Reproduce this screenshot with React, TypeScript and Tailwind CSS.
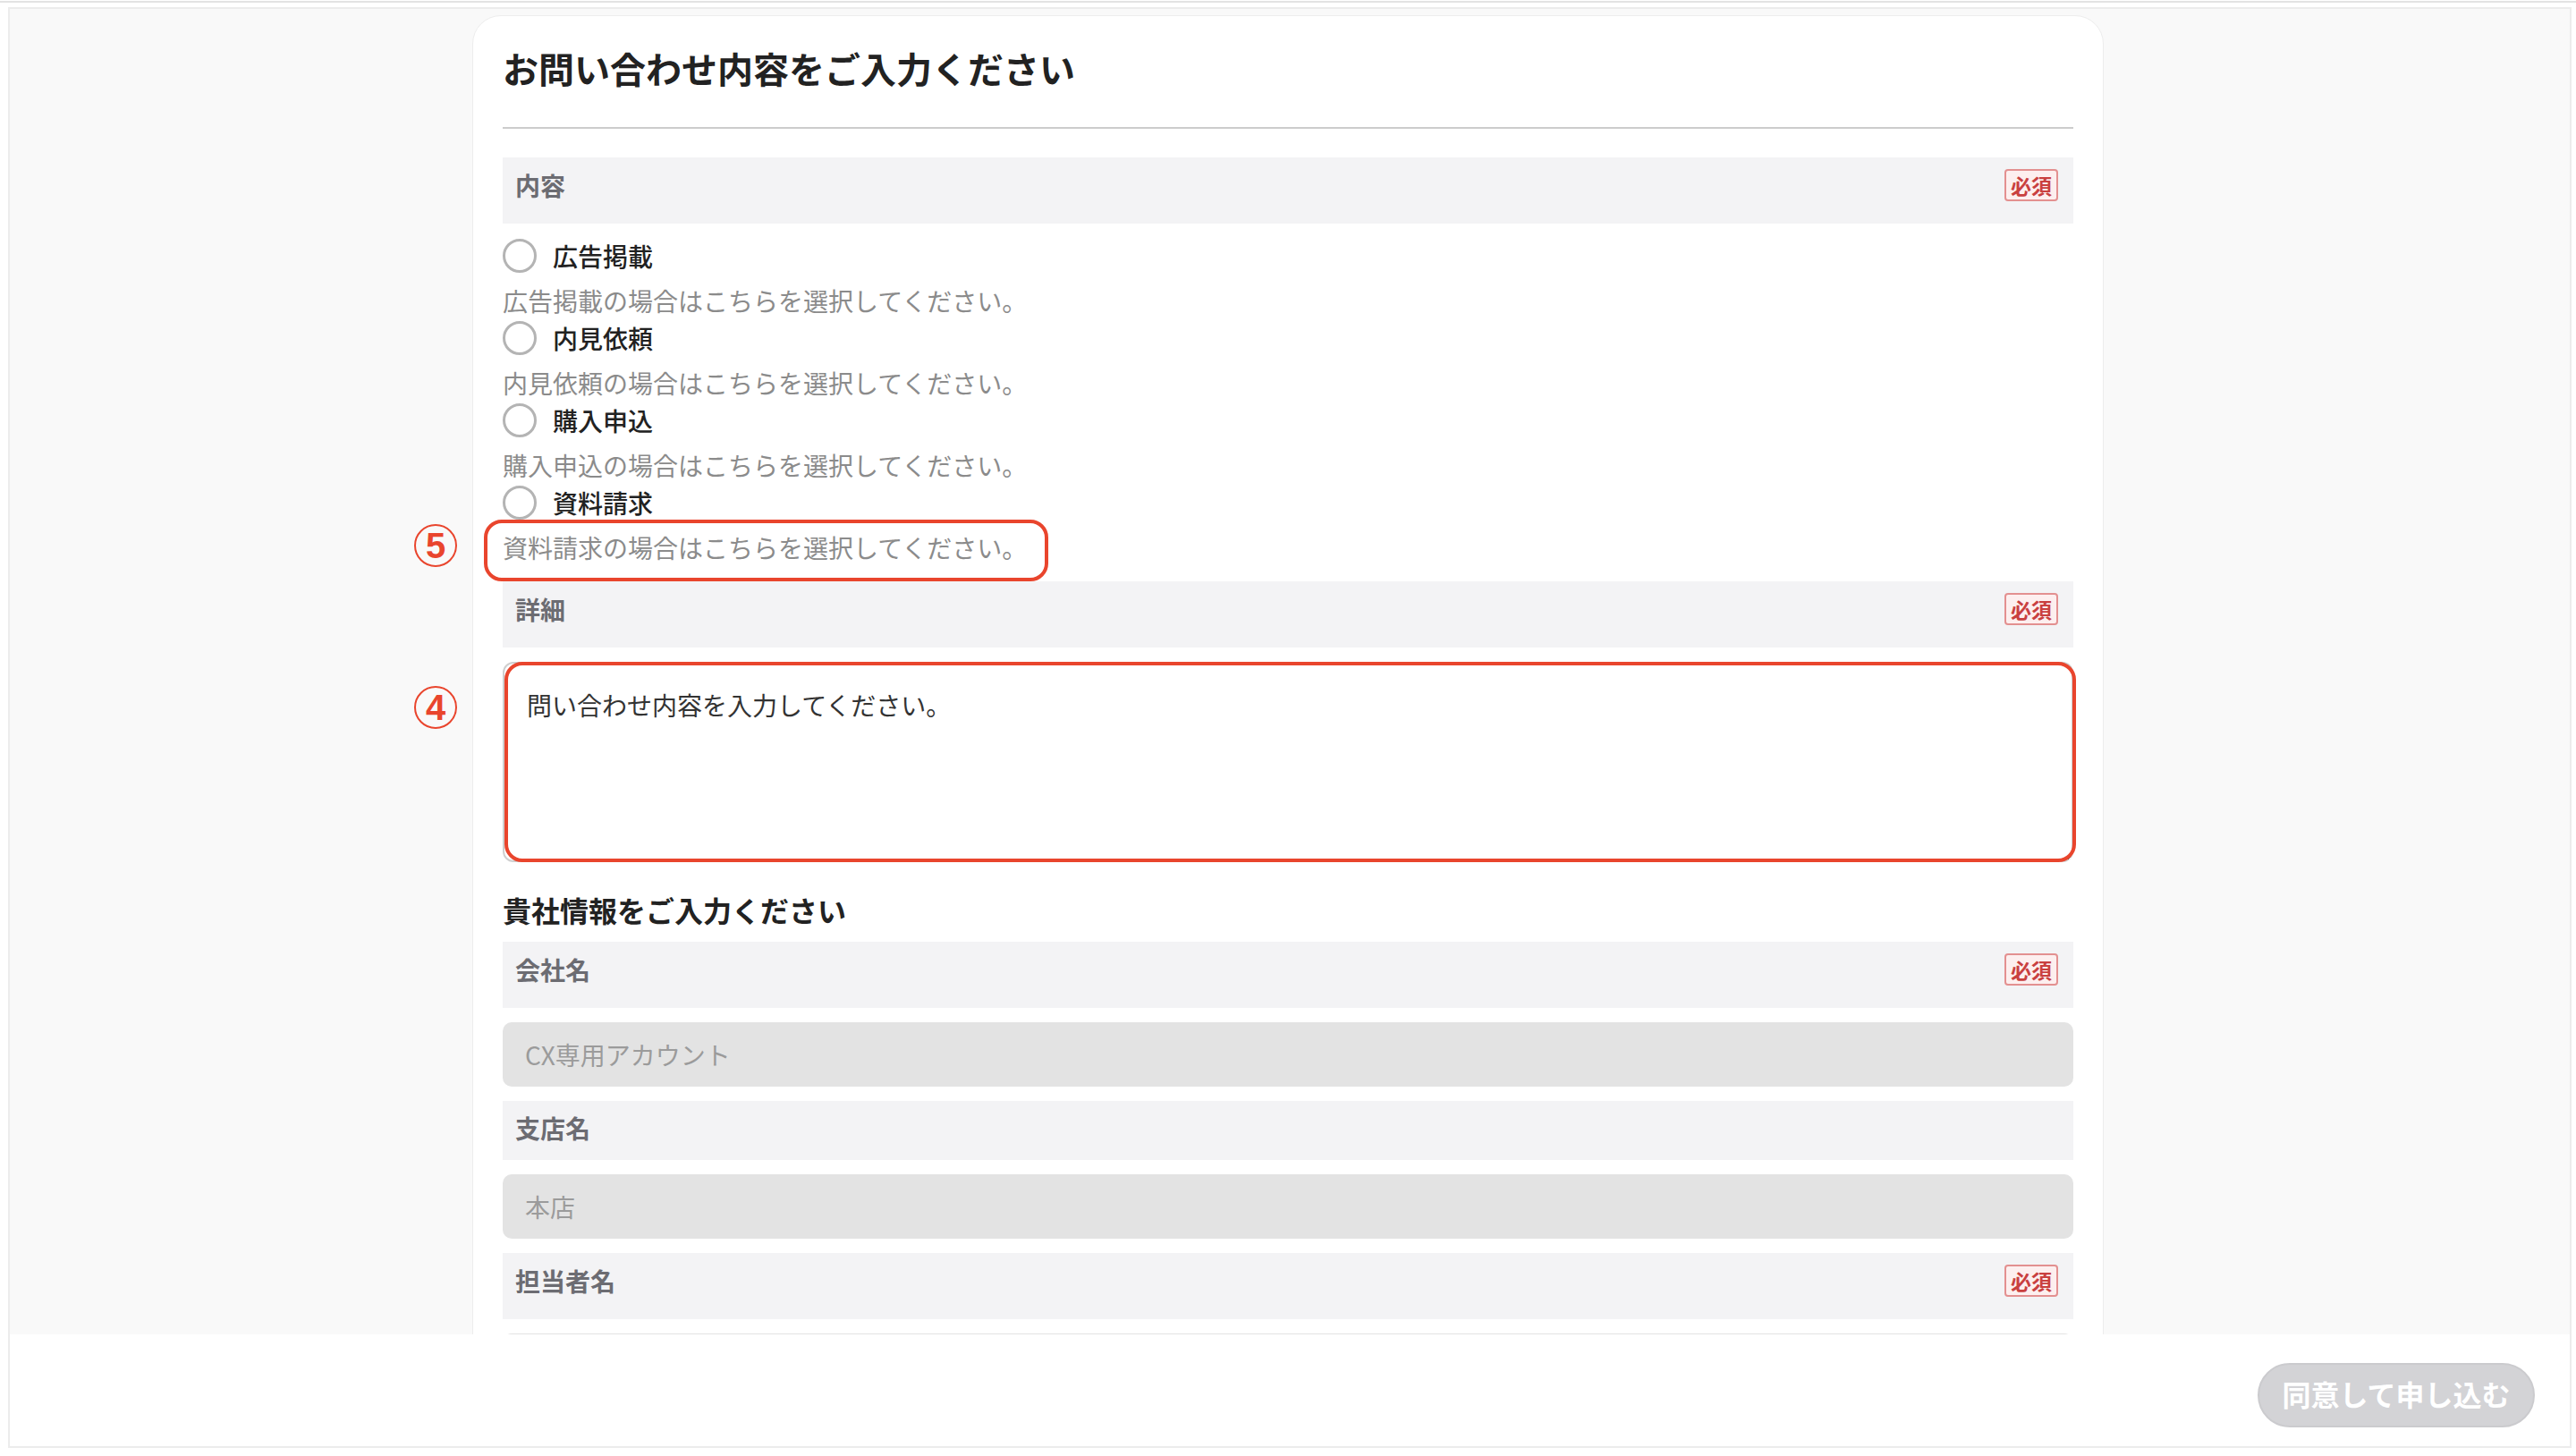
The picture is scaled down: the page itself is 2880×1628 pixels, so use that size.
import React from "react";

const Badge = () => (
  <span className="h-[36px] w-[60px] my-[7px] border-2 border-[#e39090] rounded-[4px] bg-[#fdefef] text-[#c9403f] text-[23px] font-bold flex items-center justify-center leading-none">
    必須
  </span>
);

const LabelRow = ({ label, required }: { label: string; required?: boolean }) => (
  <div
    className={
      required
        ? "bg-[#f3f3f5] flex items-center justify-between pl-[14px] pr-[17px] pt-[6px] pb-[18px]"
        : "bg-[#f3f3f5] flex items-center justify-between pl-[14px] pr-[17px] pt-[9px] pb-[15px]"
    }
  >
    <span className="text-[28px] leading-[42px] font-semibold text-[#6c6c72]">{label}</span>
    {required ? <Badge /> : null}
  </div>
);

const Annotation = ({ n, className }: { n: string; className: string }) => (
  <div
    className={
      "absolute w-[48px] h-[48px] rounded-full border-2 border-[#e9452d] text-[#e9452d] flex items-center justify-center text-[40px] font-bold leading-none font-['Liberation_Sans',sans-serif] " +
      className
    }
  >
    {n}
  </div>
);

const RadioItem = ({
  label,
  desc,
  highlight,
}: {
  label: string;
  desc: string;
  highlight?: boolean;
}) => (
  <div>
    <div className="h-[44px] flex items-center gap-[18px]">
      <span className="w-[38px] h-[38px] rounded-full border-[3px] border-[#b4b4b4] bg-white shrink-0" />
      <span className="text-[28px] leading-[42px] font-medium text-[#222]">{label}</span>
    </div>
    <div className="pt-[8px]">
      <div className="relative inline-block text-[28px] leading-[40px] text-[#8b8b8b]">
        {desc}
        {highlight ? (
          <>
            <div className="absolute left-[-21px] top-[-11px] w-[631px] h-[69px] border-4 border-[#e9452d] rounded-[20px] pointer-events-none" />
            <Annotation n="5" className="left-[-99px] top-[-6px]" />
          </>
        ) : null}
      </div>
    </div>
  </div>
);

const InputBox = ({ value }: { value: string }) => (
  <div className="h-[72px] rounded-[10px] bg-[#e3e3e3] pl-[25px] flex items-center text-[28px] text-[#9b9b9b]">
    {value}
  </div>
);

export default function App() {
  return (
    <div className="w-[2880px] h-[1628px] bg-white overflow-hidden font-['Noto_Sans_CJK_JP','Noto_Sans',sans-serif]">
      <div className="h-[2px] mt-[1px] bg-[#e3e3e3]" />
      <div className="ml-[9px] mr-[5px] mt-[5px] h-[1611px] border-2 border-[#ececec] flex flex-col">
        <div className="flex-1 bg-[#f9f9f9] overflow-hidden">
          <div className="ml-[517px] mt-[7px] w-[1824px] h-[1600px] bg-white rounded-t-[32px] border border-[#ededed] px-[33px]">
            <div className="pt-[28px] pb-[36px] text-[40px] leading-[60px] font-bold text-[#222] border-b-2 border-[#cccccc]">
              お問い合わせ内容をご入力ください
            </div>

            <div className="mt-[32px]">
              <LabelRow label="内容" required />
            </div>

            <div className="mt-[14px] flex flex-col">
              <RadioItem label="広告掲載" desc="広告掲載の場合はこちらを選択してください。" />
              <RadioItem label="内見依頼" desc="内見依頼の場合はこちらを選択してください。" />
              <RadioItem label="購入申込" desc="購入申込の場合はこちらを選択してください。" />
              <RadioItem label="資料請求" desc="資料請求の場合はこちらを選択してください。" highlight />
            </div>

            <div className="mt-[18px]">
              <LabelRow label="詳細" required />
            </div>

            <div className="mt-[16px] relative">
              <textarea
                readOnly
                placeholder="問い合わせ内容を入力してください。"
                className="block w-full h-[224px] border-2 border-[#cfcfcf] rounded-[12px] px-[25px] pt-[25px] text-[28px] leading-[42px] resize-y outline-none placeholder:text-[#333]"
              />
              <div className="absolute left-[2px] right-[-3px] top-0 bottom-0 border-4 border-[#e9452d] rounded-[20px] pointer-events-none" />
              <Annotation n="4" className="left-[-99px] top-[27px]" />
            </div>

            <div className="mt-[29px] mb-[12px] text-[32px] leading-[48px] font-bold text-[#222]">
              貴社情報をご入力ください
            </div>

            <div className="flex flex-col gap-[16px]">
              <LabelRow label="会社名" required />
              <InputBox value="CX専用アカウント" />
              <LabelRow label="支店名" />
              <InputBox value="本店" />
              <LabelRow label="担当者名" required />
              <InputBox value="" />
            </div>
          </div>
        </div>
        <div className="h-[125px] bg-white flex items-start justify-end pt-[32px] pr-[39px]">
          <button className="w-[310px] h-[72px] rounded-full bg-[#d3d3d6] border-2 border-[#cbcbce] text-white text-[32px] font-bold leading-none pb-[5px]">
            同意して申し込む
          </button>
        </div>
      </div>
    </div>
  );
}
